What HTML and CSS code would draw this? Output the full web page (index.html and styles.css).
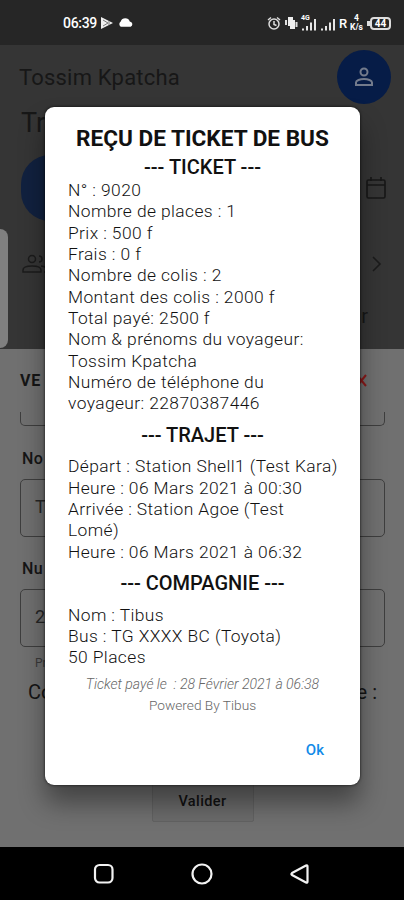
FILE: index.html
```html
<!DOCTYPE html>
<html lang="fr">
<head>
    <meta charset="utf-8">
    <meta name="viewport" content="width=device-width, initial-scale=1">
    <title>Tibus</title>
    <link rel="stylesheet" href="styles.css">
</head>
<body>
    <div class="phone">
        <div class="statusbar">
            <div class="status-left">
                <span class="clock">06:39</span>
                <svg width="14" height="14" viewBox="0 0 14 14"><path d="M1 1l12 6-12 6z" fill="#eee"/><path d="M3 4l5 3-5 3M9 5v4" stroke="#777" fill="none"/></svg>
                <svg width="17" height="12" viewBox="0 1.500 16 10"><path d="M3.500 10a3 3 0 0 1 0-5 4.500 4.500 0 0 1 8.500 0 2.600 2.600 0 0 1 .8 5z" fill="#fff"/></svg>
            </div>
            <div class="status-right">
                <svg width="14" height="15" viewBox="0 0 14 15" fill="none" stroke="#ddd" stroke-width="1.500"><circle cx="7" cy="8" r="5"/><path d="M7 5v3.500l2.500 1M1 4l3-2.500M13 4l-3-2.500"/></svg>
                <svg width="14" height="14" viewBox="0 0 14 14"><path d="M4 1h5v3h2v9H6v-3H4z" fill="#eee"/><path d="M2 4v5M12.500 6v5" stroke="#ddd" stroke-width="2"/></svg>
                <span class="signal">
                    <svg width="16" height="15" viewBox="0 0 16 15" fill="#e5e5e5"><path d="M1 12.500h2v2H1zM5 10h2v4.500H5zM9 6.500h2v8H9zM13 3h2v11.500h-2z"/></svg>
                    <small class="net">4G</small>
                </span>
                <svg width="16" height="15" viewBox="0 0 16 15" fill="#e5e5e5"><path d="M1 12.500h2v2H1zM5 10h2v4.500H5zM9 6.500h2v8H9zM13 3h2v11.500h-2z"/></svg>
                <span class="roaming">R</span>
                <span class="speed"><b>4</b><b>K/s</b></span>
                <span class="battery">44</span>
            </div>
        </div>

        <div class="home">
            <div class="topbar">
                <span class="user-name">Tossim Kpatcha</span>
                <span class="avatar">
                    <svg width="20" height="20" viewBox="0 0 20 20" fill="none" stroke="#737b8c" stroke-width="2"><circle cx="10" cy="5" r="3.500"/><path d="M2 18v-2.500c0-2 4-3.500 8-3.500s8 1.500 8 3.500V18z"/></svg>
                </span>
            </div>
            <div class="page-title">Tr</div>
            <div class="date-row">
                <span class="pill"></span>
                <svg width="20" height="22" viewBox="0 0 20 22" fill="none" stroke="#171717" stroke-width="1.600"><rect x="1" y="3" width="18" height="18" rx="1.500"/><path d="M1 8h18M5 0v4M15 0v4"/></svg>
            </div>
            <div class="people-row">
                <svg width="26" height="20" viewBox="0 0 26 20" fill="none" stroke="#1b1b1b" stroke-width="1.500"><circle cx="10" cy="5" r="3.500"/><path d="M1 18v-2c0-2.500 4-4 9-4s9 1.500 9 4v2zM17 2c4 0 4 6 0 6M19 12c4 .5 6 2 6 4v2h-3"/></svg>
                <svg width="10" height="16" viewBox="0 0 10 16" fill="none" stroke="#1b1b1b" stroke-width="1.600"><path d="M1 1l7 7-7 7"/></svg>
            </div>
            <div class="from-row">r</div>
        </div>

        <div class="sheet">
            <div class="sheet-head">
                <span>VE</span>
                <svg width="11" height="13" viewBox="0 0 11 13" fill="none" stroke="#8b1a1a" stroke-width="2"><path d="M1 1l9 11M10 1L1 12"/></svg>
            </div>
            <div class="field field-cut"></div>
            <div class="label">No</div>
            <div class="field">T</div>
            <div class="label label-phone">Nu</div>
            <div class="field">2</div>
            <div class="hint">Pr</div>
            <div class="question"><span>Co</span><span>e :</span></div>
            <button class="submit">Valider</button>
        </div>

        <div class="navbar">
            <svg width="22" height="22" viewBox="0 0 22 22" fill="none" stroke="#f2f2f2" stroke-width="2.200"><rect x="2" y="2" width="17.500" height="17.500" rx="4.500"/></svg>
            <svg width="22" height="22" viewBox="0 0 22 22" fill="none" stroke="#f2f2f2" stroke-width="2.200"><circle cx="11" cy="11" r="9.500"/></svg>
            <svg width="22" height="22" viewBox="0 0 22 22" fill="none" stroke="#f2f2f2" stroke-width="2.200" stroke-linejoin="round"><path d="M17 2.500q1.500-.5 1.500 1v15q0 1.500-1.500 1L3 12q-1.200-1 0-2z"/></svg>
        </div>

        <div class="side-handle"></div>

        <div class="dialog">
            <h1>REÇU DE TICKET DE BUS</h1>
            <h2>--- TICKET ---</h2>
            <p>N° : 9020<br>
                Nombre de places : 1<br>
                Prix : 500 f<br>
                Frais : 0 f<br>
                Nombre de colis : 2<br>
                Montant des colis : 2000 f<br>
                Total payé: 2500 f<br>
                Nom &amp; prénoms du voyageur:<br>
                Tossim Kpatcha<br>
                Numéro de téléphone du<br>
                voyageur: 22870387446</p>
            <h2 class="spaced">--- TRAJET ---</h2>
            <p>Départ : Station Shell1 (Test Kara)<br>
                Heure : 06 Mars 2021 à 00:30<br>
                Arrivée : Station Agoe (Test<br>
                Lomé)<br>
                Heure : 06 Mars 2021 à 06:32</p>
            <h2 class="spaced">--- COMPAGNIE ---</h2>
            <p>Nom : Tibus<br>
                Bus : TG XXXX BC (Toyota)<br>
                50 Places</p>
            <div class="paid">Ticket payé le&nbsp; : 28 Février 2021 à 06:38</div>
            <div class="powered">Powered By Tibus</div>
            <button class="ok">Ok</button>
        </div>
    </div>
</body>
</html>
```

FILE: styles.css
```css
* {
    box-sizing: border-box;
}

body {
    margin: 0;
    font-family: Roboto, "Liberation Sans", sans-serif;
    background: #000;
}

svg {
    display: block;
    flex: none;
}

button {
    font-family: inherit;
    border: none;
    background: none;
    padding: 0;
}

.phone {
    position: relative;
    width: 404px;
    height: 900px;
    overflow: hidden;
    display: flex;
    flex-direction: column;
}

/* status bar */
.statusbar {
    height: 45px;
    flex: none;
    background: #262626;
    display: flex;
    justify-content: space-between;
    align-items: center;
    padding: 1px 13px 0 63px;
    color: #fff;
}

.status-left, .status-right {
    display: flex;
    align-items: center;
    gap: 3px;
}

.clock {
    font-size: 14px;
    font-weight: 500;
    letter-spacing: -0.3px;
}

.signal {
    position: relative;
}

.net {
    position: absolute;
    left: 0;
    top: -1px;
    font-size: 7px;
    font-weight: 700;
    line-height: 7px;
}

.roaming {
    font-size: 13px;
    font-weight: 500;
}

.speed {
    display: flex;
    flex-direction: column;
    align-items: center;
    font-size: 8.5px;
    line-height: 9px;
    margin-right: 1px;
}

.battery {
    position: relative;
    width: 21px;
    height: 13px;
    border: 2px solid #ddd;
    border-radius: 4px;
    font-size: 10px;
    font-weight: 700;
    line-height: 9px;
    text-align: center;
    margin-left: 3px;
}

.battery::before {
    content: "";
    position: absolute;
    left: -5px;
    top: 2px;
    width: 3px;
    height: 5px;
    background: #ddd;
}

/* page behind the dialog */
.home {
    height: 304px;
    flex: none;
    background: #353535;
    color: #171717;
}

.topbar {
    display: flex;
    justify-content: space-between;
    align-items: center;
    height: 64px;
    padding: 0 13px 0 19px;
}

.user-name {
    font-size: 22px;
    letter-spacing: 0.2px;
}

.avatar {
    width: 54px;
    height: 54px;
    border-radius: 50%;
    background: #061c47;
    display: flex;
    align-items: center;
    justify-content: center;
}

.page-title {
    font-size: 27px;
    line-height: 32px;
    padding: 0 21px;
    margin-top: -2px;
}

.date-row {
    display: flex;
    justify-content: space-between;
    align-items: center;
    height: 66px;
    margin-top: 16px;
    padding: 0 18px 0 21px;
}

.pill {
    width: 180px;
    height: 66px;
    border-radius: 29px;
    background: #11213f;
}

.people-row {
    display: flex;
    justify-content: space-between;
    align-items: center;
    height: 32px;
    margin-top: 27px;
    padding: 0 22px;
}

.from-row {
    font-size: 20px;
    line-height: 24px;
    margin-top: 24px;
    text-align: right;
    padding-right: 36px;
}

.sheet {
    flex: 1;
    background: #707070;
    color: #151515;
    padding: 19px 19px 0 20px;
    display: flex;
    flex-direction: column;
}

.sheet-head {
    display: flex;
    justify-content: space-between;
    align-items: center;
    font-size: 16px;
    font-weight: 700;
    line-height: 25px;
    letter-spacing: 0.8px;
    padding-right: 18px;
}

.field {
    height: 58px;
    flex: none;
    border: 1px solid #3e3e3e;
    border-radius: 5px;
    font-size: 18px;
    line-height: 54px;
    padding-left: 14px;
    color: #262626;
}

.field-cut {
    height: 14px;
    border-top: none;
    border-radius: 0 0 5px 5px;
    margin-top: 19px;
}

.label {
    font-size: 16px;
    font-weight: 500;
    line-height: 20px;
    letter-spacing: 0.4px;
    margin: 23px 0 10px 2px;
}

.label-phone {
    margin-top: 22px;
}

.hint {
    font-size: 12px;
    line-height: 16px;
    color: #3a3a3a;
    padding-left: 15px;
    margin-top: 8px;
}

.question {
    display: flex;
    justify-content: space-between;
    font-size: 20px;
    line-height: 26px;
    padding: 0 8px;
    margin-top: 8px;
}

.submit {
    align-self: center;
    width: 102px;
    height: 42px;
    margin-top: 75px;
    background: #6b6b6b;
    border: 1px solid #626262;
    border-radius: 2px;
    font-size: 14.5px;
    font-weight: 500;
    letter-spacing: 0.4px;
    color: #111;
}

.navbar {
    height: 53px;
    flex: none;
    background: #000;
    display: flex;
    justify-content: center;
    align-items: center;
    gap: 76px;
}

/* edge panel handle of the launcher */
.side-handle {
    position: absolute;
    left: 0;
    top: 229px;
    width: 8px;
    height: 119px;
    background: #808080;
    border-radius: 0 8px 8px 0;
}

/* ticket receipt */
.dialog {
    position: absolute;
    left: 45px;
    top: 107px;
    width: 315px;
    height: 678px;
    padding: 18px 23px 0;
    background: #fff;
    border-radius: 9px;
    box-shadow: 0 0 3px rgba(0, 0, 0, 0.8), 0 18px 26px rgba(0, 0, 0, 0.4);
    color: #111;
    display: flex;
    flex-direction: column;
}

.dialog h1, .dialog h2, .dialog p {
    margin: 0;
    white-space: nowrap;
}

.dialog h1 {
    font-size: 22.6px;
    font-weight: 700;
    line-height: 28px;
    text-align: center;
}

.dialog h2 {
    font-size: 20px;
    font-weight: 500;
    line-height: 29px;
    margin-bottom: -2px;
    text-align: center;
}

.dialog h2.spaced {
    margin: 7px 0 8.5px;
    line-height: 26px;
}

.dialog p {
    font-size: 17.4px;
    line-height: 21.35px;
    font-weight: 300;
    letter-spacing: 0.4px;
}

.paid, .powered {
    font-size: 14px;
    font-weight: 300;
    line-height: 21px;
    text-align: center;
    color: #666;
    white-space: nowrap;
}

.paid {
    font-style: italic;
    margin-top: 5px;
}

.powered {
    font-size: 13.7px;
}

.ok {
    align-self: flex-end;
    margin: 23px 13px 0 0;
    font-size: 15px;
    font-weight: 500;
    line-height: 22px;
    color: #128be8;
}
```
